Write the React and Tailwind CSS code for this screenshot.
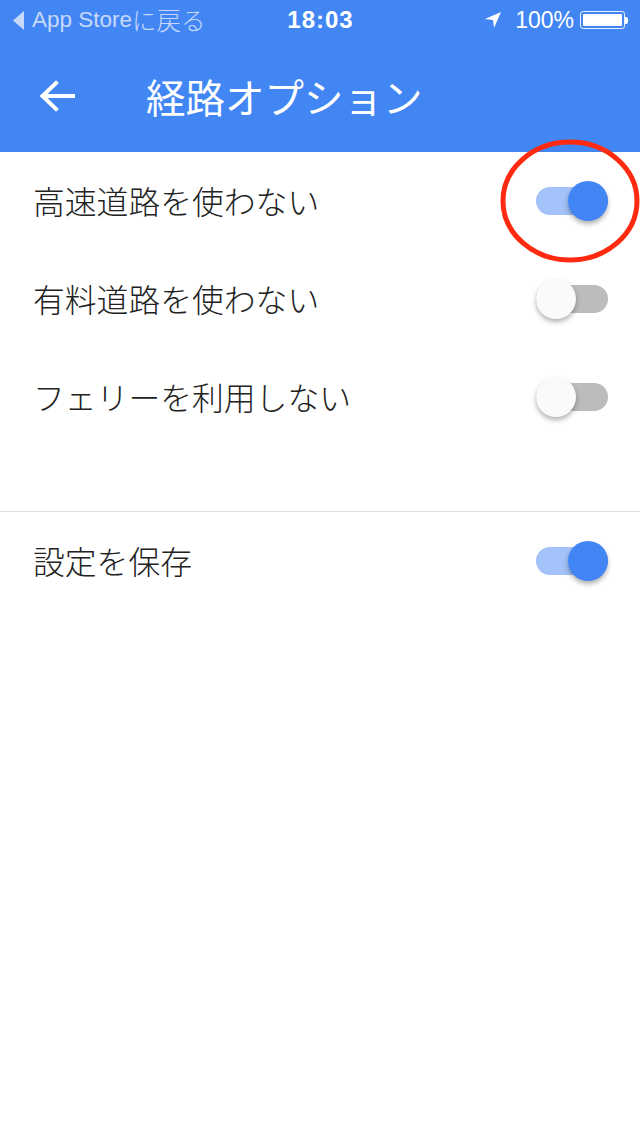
import React from "react";

function Toggle({ on }) {
  return (
    <div className="relative w-[72px] h-[42px] flex items-center">
      <div
        className={
          "w-[72px] h-[28px] rounded-full " +
          (on ? "bg-[#a3c2f9]" : "bg-[#bcbcbc]")
        }
      />
      <div
        className={
          "absolute top-[1px] w-[40px] h-[40px] rounded-full shadow-[0_3px_5px_rgba(0,0,0,0.3)] " +
          (on ? "left-[32px] bg-[#4285f4]" : "left-0 bg-[#fafafa]")
        }
      />
    </div>
  );
}

function Row({ label, on, children }) {
  return (
    <div className="relative h-[98px] flex items-center justify-between pl-[33px] pr-[32px]">
      <span className="text-[31.8px] font-light text-[#222222] leading-none">
        {label}
      </span>
      <Toggle on={on} />
      {children}
    </div>
  );
}

export default function App() {
  return (
    <div
      className="w-[640px] h-[1136px] bg-white overflow-hidden"
      style={{ fontFamily: '"Noto Sans CJK JP", "Noto Sans", sans-serif' }}
    >
      <div className="bg-[#4286f4]">
        <div
          className="h-[40px] flex items-center justify-between pl-[13px] pr-[12px] leading-none"
          style={{ fontFamily: '"Liberation Sans", "Noto Sans CJK JP", sans-serif' }}
        >
          <div className="flex items-center w-[240px] text-[#c7d8f9]">
            <svg width="11" height="19" viewBox="0 0 11 19" className="mr-[8px]">
              <path d="M11 0 L0 9.5 L11 19 Z" fill="#c7d8f9" />
            </svg>
            <span className="text-[22.5px]">App Store</span>
            <span
              style={{ fontFamily: '"Noto Sans CJK JP", sans-serif' }}
              className="text-[24.5px] font-light"
            >
              に戻る
            </span>
          </div>
          <div className="text-white font-bold text-[24px] tracking-[1px]">18:03</div>
          <div className="flex items-center justify-end w-[240px] text-white">
            <svg width="18" height="18" viewBox="0 0 18 18" className="mr-[13px]">
              <path d="M17 1 L1 8 L9 9 L10 17 Z" fill="white" />
            </svg>
            <span className="text-[23px]">100%</span>
            <div className="ml-[6px] flex items-center">
              <div className="w-[45px] h-[18px] border-[1.5px] border-[#e8effd] rounded-[3px] p-[2px]">
                <div className="w-full h-full bg-white rounded-[1px]" />
              </div>
              <div className="w-[3px] h-[7px] bg-white rounded-r-[2px]" />
            </div>
          </div>
        </div>
        <div className="h-[112px] flex items-center">
          <div className="w-[146px] pl-[39px] flex items-center">
            <svg width="36" height="32" viewBox="0 0 36 32">
              <path
                d="M34 16 H4 M17 3 L3.5 16 L17 29"
                stroke="white"
                strokeWidth="4"
                fill="none"
                strokeLinecap="square"
              />
            </svg>
          </div>
          <span className="text-white text-[39.5px] leading-none">経路オプション</span>
        </div>
      </div>

      <Row label="高速道路を使わない" on={true}>
        <svg
          className="absolute left-[499px] top-[-14px]"
          width="142"
          height="126"
          viewBox="0 0 142 126"
        >
          <ellipse cx="71" cy="63" rx="67" ry="59" fill="none" stroke="#ff2a10" strokeWidth="5" />
        </svg>
      </Row>
      <Row label="有料道路を使わない" on={false} />
      <Row label="フェリーを利用しない" on={false} />
      <div className="h-[65px]" />
      <div className="h-px bg-[#e0e0e0]" />
      <Row label="設定を保存" on={true} />
    </div>
  );
}
